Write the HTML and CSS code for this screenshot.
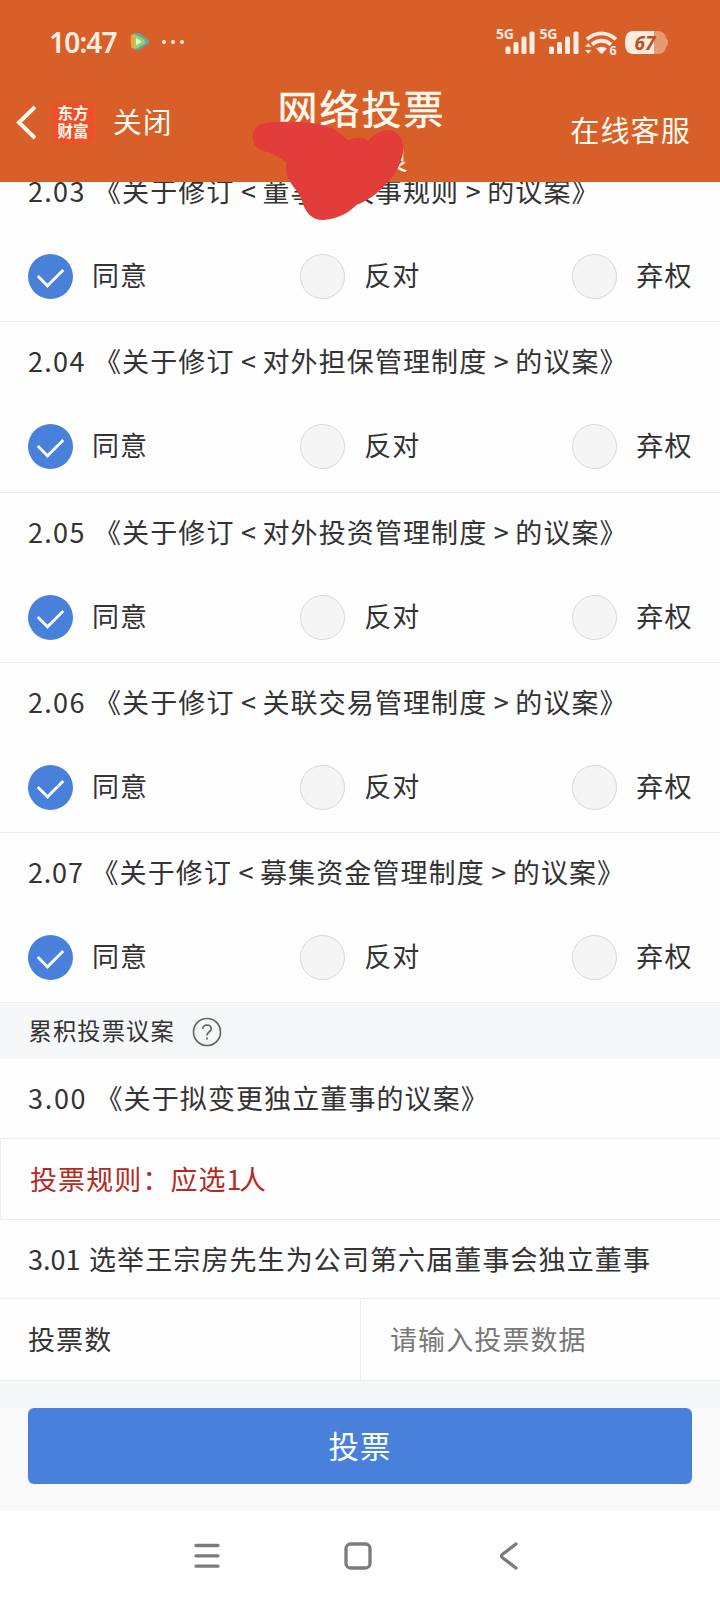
FILE: index.html
```html
<!DOCTYPE html>
<html lang="zh-CN">
<head>
<meta charset="utf-8">
<title>网络投票</title>
<link rel="stylesheet" href="styles.css">
</head>
<body>
<div class="screen">
  <header class="header">
    <div class="status">
      <span class="clock">10:47</span>
      <svg class="play" width="20" height="20" viewBox="0 0 20 20">
        <path d="M3 1.5Q7-.5 11 2.5L18 7.500Q20 10 18 11.500L10 17Q6 19 3.500 17Z" fill="#58a9bd"/>
        <path d="M1 3Q4 1 9 4L14 8Q16 10 14 11.500L8 15.500Q4 18 1.500 15.500Q0 9 1 3Z" fill="#f0a23c"/>
        <path d="M4 3.500Q8 3 14 8Q16 10 14 11.500L8 15.500Q5 17 4 15Z" fill="#8fdc5a"/>
        <path d="M6 6L11.500 9.500L6 13Z" fill="#fff"/>
      </svg>
      <span class="dots"><i></i><i></i><i></i></span>
      <svg class="signals" width="176" height="32" viewBox="0 0 176 32">
        <g fill="#fdece1">
          <text class="net" x="0" y="13.500" textLength="18">5G</text>
          <rect x="9.500" y="21.500" width="5" height="7.500" rx="1.500"/>
          <rect x="17.500" y="17" width="5" height="12" rx="1.500"/>
          <rect x="25.500" y="11.500" width="5" height="17.500" rx="1.500"/>
          <rect x="33.500" y="6.500" width="5" height="22.500" rx="1.500"/>
          <text class="net" x="43.500" y="13.500" textLength="18">5G</text>
          <rect x="53" y="21.500" width="5" height="7.500" rx="1.500"/>
          <rect x="61" y="17" width="5" height="12" rx="1.500"/>
          <rect x="69" y="11.500" width="5" height="17.500" rx="1.500"/>
          <rect x="77.500" y="6.500" width="5" height="22.500" rx="1.500"/>
          <path d="M100 23.500Q105.500 20 111 23.500L106.500 28.300Q105.500 29 104.500 28.300Z"/>
          <path d="M89 21.800L92.300 18.200L95.500 21.800ZM89 25L92.300 28.800L95.500 25Z"/>
          <text class="gen" x="113.500" y="29.500">6</text>
        </g>
        <g fill="none" stroke="#fdece1" stroke-width="3.800">
          <path d="M91 14.200Q105.500 2.500 120 14.200"/>
          <path d="M96 19.500Q105.500 12 115 19.500"/>
        </g>
        <path d="M137 6H162Q169 6 170.300 13.500Q172 14 172 17.500Q172 21 170.300 21.500Q169 29 162 29H137Q129 29 129 17.500Q129 6 137 6Z" fill="#e59a6f"/>
        <path d="M137 6H158V29H137Q129 29 129 17.500Q129 6 137 6Z" fill="#fdece1"/>
        <text class="charge" x="138.500" y="24.500" textLength="21">67</text>
      </svg>
    </div>
    <div class="nav">
      <div class="nav-left">
        <svg width="22" height="36" viewBox="0 0 22 36"><path d="M21 2L5 17.500L21 33" fill="none" stroke="#fffaf0" stroke-width="4"/></svg>
        <span class="logo"><span>东方</span><span>财富</span></span>
        <span class="close">关闭</span>
      </div>
      <div class="nav-title"><h1>网络投票</h1><span>良</span></div>
      <span class="service">在线客服</span>
    </div>
    <svg class="scribble" width="160" height="104" viewBox="0 150 480 312">
      <path fill="#e23d3a" d="M80 158C130 153 225 152 270 172C290 180 310 203 327 211C345 200 370 202 384 212C400 195 420 180 445 180C475 182 490 205 490 235C490 270 468 315 430 350C410 375 370 397 350 404C330 425 300 445 250 450C215 450 195 425 187 395C180 365 141 340 138 300Q137 286 140 276C120 266 100 250 80 245C55 243 38 225 38 200C40 175 55 160 80 158Z"/>
    </svg>
  </header>

  <main class="content">
    <section class="item">
      <h2><b class="num">2.03</b>《关于修订<i>&lt;</i>董事会议事规则<i>&gt;</i>的议案》</h2>
      <div class="options"><label><span class="radio on"></span>同意</label><label><span class="radio"></span>反对</label><label><span class="radio"></span>弃权</label></div>
    </section>
    <section class="item">
      <h2><b class="num">2.04</b>《关于修订<i>&lt;</i>对外担保管理制度<i>&gt;</i>的议案》</h2>
      <div class="options"><label><span class="radio on"></span>同意</label><label><span class="radio"></span>反对</label><label><span class="radio"></span>弃权</label></div>
    </section>
    <section class="item">
      <h2><b class="num">2.05</b>《关于修订<i>&lt;</i>对外投资管理制度<i>&gt;</i>的议案》</h2>
      <div class="options"><label><span class="radio on"></span>同意</label><label><span class="radio"></span>反对</label><label><span class="radio"></span>弃权</label></div>
    </section>
    <section class="item">
      <h2><b class="num">2.06</b>《关于修订<i>&lt;</i>关联交易管理制度<i>&gt;</i>的议案》</h2>
      <div class="options"><label><span class="radio on"></span>同意</label><label><span class="radio"></span>反对</label><label><span class="radio"></span>弃权</label></div>
    </section>
    <section class="item">
      <h2><b class="num num-narrow">2.07</b>《关于修订<i>&lt;</i>募集资金管理制度<i>&gt;</i>的议案》</h2>
      <div class="options"><label><span class="radio on"></span>同意</label><label><span class="radio"></span>反对</label><label><span class="radio"></span>弃权</label></div>
    </section>
    <div class="group"><span>累积投票议案</span>
      <svg width="30" height="30" viewBox="0 0 30 30" fill="none" stroke="#666" stroke-width="1.700"><circle cx="15" cy="15" r="13.500"/><path d="M10.800 12Q11 8 15 8Q19.200 8.200 19.200 11.700Q19.200 13.500 17 15Q15 16.500 15 18.500"/><path d="M15 20.500V22.500"/></svg>
    </div>
    <h2 class="row row-first"><b class="num num-wide">3.00</b>《关于拟变更独立董事的议案》</h2>
    <p class="row rule">投票规则<span class="colon">：</span>应选<span class="one">1</span>人</p>
    <h2 class="row row-name"><b class="num num-tight">3.01</b>选举王宗房先生为公司第六届董事会独立董事</h2>
    <div class="vote"><span>投票数</span><span class="field">请输入投票数据</span></div>
  </main>

  <div class="submit"><button type="button">投票</button></div>

  <footer class="sysnav">
    <svg width="28" height="28" viewBox="0 0 28 28"><path d="M3 3.500H25M3 13.800H25M3 24.200H25"/></svg>
    <svg width="28" height="28" viewBox="0 0 28 28"><rect x="2" y="2" width="24" height="24" rx="4.500"/></svg>
    <svg width="28" height="28" viewBox="0 0 28 28"><path d="M21 2L7.500 12.300Q5.500 14 7.500 15.700L21 26"/></svg>
  </footer>
</div>
</body>
</html>
```
FILE: styles.css
```css
* { box-sizing: border-box; }
body {
  margin: 0;
  font-family: "Noto Sans CJK SC", sans-serif;
  color: #333;
  background: #fefefe;
}
h1, h2, p { margin: 0; font-weight: 400; }
b, i { font-weight: 400; font-style: normal; }
.screen {
  width: 720px;
  height: 1600px;
  overflow: hidden;
  display: flex;
  flex-direction: column;
}

/* Header */
.header {
  position: relative;
  z-index: 1;
  flex: none;
  height: 182px;
  background: #d86028;
  color: #fffaf0;
}
.status {
  display: flex;
  align-items: center;
  height: 84px;
  padding: 0 48px 0 49px;
}
.clock {
  width: 81px;
  font: 600 28px "Noto Sans", sans-serif;
  letter-spacing: -.8px;
  color: #fdece1;
}
.play { flex: none; }
.dots { display: flex; gap: 5px; margin-left: 12px; }
.dots i { width: 4px; height: 4px; border-radius: 50%; background: #fdece1; }
.signals { margin-left: auto; margin-top: -3px; }
.net { font: 700 14px "Noto Sans", sans-serif; }
.gen { font: 700 12.5px "Noto Sans", sans-serif; }
.charge { font: italic 700 19px "Noto Sans", sans-serif; fill: #b9541f; }

.nav {
  display: grid;
  grid-template-columns: 236px 1fr 236px;
  height: 98px;
}
.nav-left { display: flex; align-items: center; height: 78px; padding-left: 14px; }
.logo {
  display: flex;
  flex-direction: column;
  width: 42px;
  height: 42px;
  margin-left: 16px;
  padding-top: 1px;
  border-radius: 9px;
  background: #ee5029;
  font-size: 15.5px;
  font-weight: 700;
  line-height: 18px;
  text-align: center;
}
.close { margin: -4px 0 0 19px; font-size: 28.5px; letter-spacing: 1.5px; line-height: 40px; }
.nav-title { display: flex; flex-direction: column; align-items: center; }
.nav-title h1 { font-size: 40px; letter-spacing: 2px; line-height: 50px; margin: -2px 0 0 3px; font-weight: 400; -webkit-text-stroke: .5px; }
.nav-title span { font-size: 28px; line-height: 30px; margin-left: 68px; margin-top: 11px; }
.service {
  justify-self: end;
  margin: 25px 29px 0 0;
  font-size: 29px;
  letter-spacing: 1.2px;
  line-height: 40px;
}
.scribble { position: absolute; left: 240px; top: 120px; overflow: visible; }

/* Proposals */
.content {
  flex: none;
  height: 1226px;
  overflow: hidden;
  background: linear-gradient(#fefefe 1198px, #f6f7f9 1198px);
  font-size: 27px;
  letter-spacing: 1.1px;
}
.item {
  height: 170.25px;
  border-bottom: 1px solid #eee;
}
.item:first-child { margin-top: -30px; }
h2 { display: flex; padding-left: 28px; font-size: 27px; }
.item h2 { height: 78px; line-height: 77px; }
h2 i { width: 28px; text-align: center; letter-spacing: 0; }
.num { width: 66px; letter-spacing: 1.3px; font-size: 27px; }
.num-narrow { width: 63.5px; letter-spacing: .8px; }
.num-wide { width: 67.5px; letter-spacing: 1.7px; }
.num-tight { width: 61px; letter-spacing: 0; }
.options {
  display: flex;
  justify-content: space-between;
  padding: 24px 27.5px 0 28px;
  line-height: 41px;
}
.options label { display: flex; gap: 19px; }
.radio {
  width: 45px;
  height: 45px;
  border: 1px solid #d8d8d8;
  border-radius: 50%;
  background: #f5f5f5;
}
.radio.on { border: 0; background: #4980d9; display: flex; justify-content: center; }
.radio.on::after {
  content: "";
  width: 22px;
  height: 13px;
  margin-top: 12px;
  border: solid #fff;
  border-width: 0 0 3.8px 3.8px;
  transform: rotate(-45deg) scale(.95);
}

.group {
  display: flex;
  align-items: center;
  gap: 17px;
  height: 56px;
  padding-left: 28.5px;
  background: #f6f7f9;
  font-size: 23.3px;
  letter-spacing: 1.1px;
}
.group span { margin-top: -3px; }
.group svg { margin-top: 1px; }
.row { border-bottom: 1px solid #eee; }
.row-first { height: 80px; line-height: 77px; }
.rule {
  height: 81px;
  padding-left: 29px;
  border-left: 1px solid #eee;
  line-height: 79px;
  color: #b52a22;
}
.colon { display: inline-block; width: 28px; letter-spacing: 0; }
.one { letter-spacing: -2.5px; }
.row-name { height: 79px; line-height: 77px; }
.vote {
  display: grid;
  grid-template-columns: 360px 1fr;
  height: 82px;
  border-bottom: 1px solid #eee;
  line-height: 80px;
}
.vote span { padding-left: 28px; }
.vote .field { padding-left: 29px; border-left: 1px solid #eee; color: #777; }

/* Submit and system navigation */
.submit { flex: none; height: 103px; padding: 0 28px; background: #f9f9f9; }
.submit button {
  display: block;
  width: 100%;
  height: 75.5px;
  padding: 0 0 2px;
  border: 0;
  border-radius: 6px;
  background: #4980dc;
  color: #fff;
  font: 30.5px "Noto Sans CJK SC", sans-serif;
  letter-spacing: 1px;
}
.sysnav {
  flex: 1;
  display: flex;
  justify-content: center;
  align-items: center;
  gap: 123px;
  padding-right: 5px;
  background: #fff;
}
.sysnav svg { fill: none; stroke: #7c7c7c; stroke-width: 3.3; stroke-linecap: round; }
```
